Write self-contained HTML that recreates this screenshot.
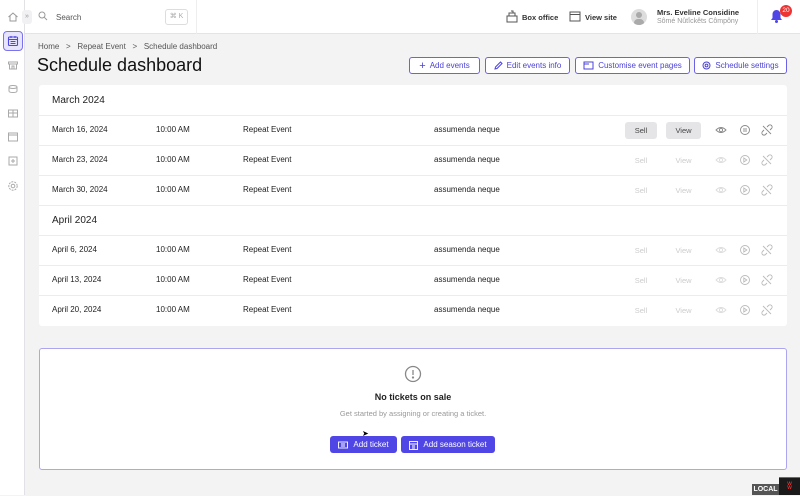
<!DOCTYPE html>
<html><head><meta charset="utf-8"><style>
*{box-sizing:border-box;margin:0;padding:0}
body{width:800px;height:495px;overflow:hidden;background:#f3f3f4;font-family:"Liberation Sans",sans-serif;color:#222;position:relative}
.abs{position:absolute}
.side{left:0;top:0;width:25px;height:495px;background:#fff;border-right:1px solid #e2e2e6}
.top{left:25px;top:0;width:775px;height:34px;background:#fff;border-bottom:1px solid #e4e4e8}
.t9{font-size:8px;color:#333}
.btn{position:absolute;top:57px;height:17px;border:1px solid #6b62e6;border-radius:3px;background:#fff;color:#4b43d6;font-size:8px;display:flex;align-items:center;justify-content:center;gap:4px}
.card{left:39px;top:85px;width:748px;height:241px;background:#fff;border-radius:3px}
.row{position:absolute;left:0;width:748px;height:30px;border-top:1px solid #ececef;font-size:8px;color:#222}
.row span{position:absolute;top:9px}
.hdr{font-size:10px;color:#222}
.sb{position:absolute;top:6px;height:17px;border-radius:3px;font-size:7.5px;display:flex;align-items:center;justify-content:center}
.pb{position:absolute;top:436px;height:17px;background:#4f46e5;color:#fff;border-radius:3px;font-size:8px;display:flex;align-items:center;justify-content:center;gap:5px}
svg{display:block}
</style></head><body>
<div class="abs side"></div>
<div class="abs" style="left:7px;top:11px"><svg width="12" height="12" viewBox="0 0 12 12" fill="none" stroke="#999" stroke-width="1"><path d="M1.5 6 6 2l4.5 4M3 5v5h6V5"/></svg></div>
<div class="abs" style="left:3px;top:31px;width:20px;height:20px;border:1.5px solid #7b73ee;background:#e7e5fd;border-radius:4px"></div>
<div class="abs" style="left:7px;top:35px"><svg width="12" height="12" viewBox="0 0 12 12" fill="none" stroke="#4f46e5" stroke-width="1.1"><rect x="1.5" y="2" width="9" height="8.5" rx="1"/><path d="M1.5 4.5h9M4 1v2M8 1v2M3.5 6.5h5M3.5 8.5h5"/></svg></div>
<div class="abs" style="left:7px;top:59px"><svg width="12" height="12" viewBox="0 0 12 12" fill="none" stroke="#aaa"><path d="M1.5 3h9v2h-9zM2.5 5v5h7V5M5 10V7h2v3"/></svg></div>
<div class="abs" style="left:7px;top:83px"><svg width="12" height="12" viewBox="0 0 12 12" fill="none" stroke="#aaa"><ellipse cx="6" cy="4" rx="4" ry="1.5"/><path d="M2 4v4c0 1 2 1.5 4 1.5S10 9 10 8V4"/></svg></div>
<div class="abs" style="left:7px;top:107px"><svg width="12" height="12" viewBox="0 0 12 12" fill="none" stroke="#aaa"><rect x="1.5" y="3" width="9" height="7"/><path d="M1.5 6h9M6 3v7"/></svg></div>
<div class="abs" style="left:7px;top:131px"><svg width="12" height="12" viewBox="0 0 12 12" fill="none" stroke="#aaa"><rect x="1.5" y="2" width="9" height="8"/><path d="M1.5 4h9"/></svg></div>
<div class="abs" style="left:7px;top:155px"><svg width="12" height="12" viewBox="0 0 12 12" fill="none" stroke="#aaa"><rect x="2" y="2" width="8" height="8"/><path d="M4 6h4M6 4v4"/></svg></div>
<div class="abs" style="left:7px;top:180px"><svg width="12" height="12" viewBox="0 0 12 12" fill="none" stroke="#aaa"><circle cx="6" cy="6" r="1.8"/><circle cx="6" cy="6" r="4.2" stroke-dasharray="2 1"/></svg></div>

<div class="abs top"></div>
<div class="abs" style="left:22px;top:10px;width:10px;height:14px;background:#f1f1f3;border-radius:3px;font-size:7px;color:#999;text-align:center;line-height:14px">»</div>
<div class="abs" style="left:38px;top:11px"><svg width="10" height="10" viewBox="0 0 10 10" fill="none" stroke="#999"><circle cx="4" cy="4" r="3"/><path d="M6.3 6.3 9 9"/></svg></div>
<div class="abs t9" style="left:56px;top:13px;color:#555">Search</div>
<div class="abs" style="left:165px;top:9px;width:23px;height:16px;border:1px solid #ddd;border-radius:3px;font-size:7px;color:#aaa;text-align:center;line-height:14px">⌘ K</div>
<div class="abs" style="left:196px;top:0;width:1px;height:34px;background:#eee"></div>
<div class="abs" style="left:506px;top:10px"><svg width="12" height="13" viewBox="0 0 12 13" fill="none" stroke="#555"><rect x="1" y="6" width="10" height="6"/><rect x="3" y="3" width="6" height="3"/><path d="M5 1h2v2"/></svg></div>
<div class="abs t9" style="left:522px;top:13px;font-weight:bold;color:#333;font-size:7.5px">Box office</div>
<div class="abs" style="left:569px;top:11px"><svg width="12" height="11" viewBox="0 0 12 11" fill="none" stroke="#555"><rect x="1" y="1" width="10" height="9"/><path d="M1 3.5h10"/></svg></div>
<div class="abs t9" style="left:585px;top:13px;font-weight:bold;font-size:7.5px">View site</div>
<div class="abs" style="left:631px;top:9px;width:16px;height:16px;border-radius:50%;background:#ddd;overflow:hidden"><div style="position:absolute;left:5px;top:3px;width:6px;height:6px;border-radius:50%;background:#aaa"></div><div style="position:absolute;left:3px;top:10px;width:10px;height:8px;border-radius:5px;background:#aaa"></div></div>
<div class="abs" style="left:657px;top:8px;font-size:7.5px;font-weight:bold;color:#333">Mrs. Eveline Considine</div>
<div class="abs" style="left:657px;top:18px;font-size:7px;color:#999">Sômé Nûtîckêts Cômpôny</div>
<div class="abs" style="left:757px;top:0;width:1px;height:34px;background:#eee"></div>
<div class="abs" style="left:770px;top:9px"><svg width="13" height="15" viewBox="0 0 13 15"><path d="M6.5 1C4 1 2.5 3 2.5 5.5V9L1 11h11L10.5 9V5.5C10.5 3 9 1 6.5 1z" fill="#4f46e5"/><circle cx="6.5" cy="12.5" r="1.5" fill="#4f46e5"/></svg></div>
<div class="abs" style="left:780px;top:5px;width:12px;height:12px;border-radius:50%;background:#e33;color:#fff;font-size:6.5px;text-align:center;line-height:12px">20</div>

<div class="abs" style="left:38px;top:42px;font-size:8px;color:#555">Home &nbsp;&nbsp;&gt;&nbsp;&nbsp; Repeat Event &nbsp;&nbsp;&gt;&nbsp;&nbsp; Schedule dashboard</div>
<div class="abs" style="left:37px;top:55px;font-size:18px;color:#111">Schedule dashboard</div>

<div class="btn" style="left:409px;width:71px"><span style="font-size:11px">+</span>Add events</div>
<div class="btn" style="left:485px;width:85px"><svg width="9" height="9" viewBox="0 0 9 9" fill="none" stroke="#4b43d6"><path d="M1 8l.5-2L6.5 1 8 2.5 3 7.5z"/></svg>Edit events info</div>
<div class="btn" style="left:575px;width:115px"><svg width="11" height="9" viewBox="0 0 11 9" fill="none" stroke="#4b43d6"><rect x="1" y="1" width="9" height="7"/><path d="M1 3h5"/></svg>Customise event pages</div>
<div class="btn" style="left:694px;width:93px"><svg width="9" height="9" viewBox="0 0 9 9" fill="none" stroke="#4b43d6"><circle cx="4.5" cy="4.5" r="1.4"/><circle cx="4.5" cy="4.5" r="3.5"/></svg>Schedule settings</div>

<div class="abs card">
<div class="abs hdr" style="left:13px;top:10px">March 2024</div>
<div class="row" style="top:30px"><span style="left:13px">March 16, 2024</span><span style="left:117px">10:00 AM</span><span style="left:204px">Repeat Event</span><span style="left:395px">assumenda neque</span>
<div class="sb" style="left:586px;width:32px;background:#e5e5e8;color:#444">Sell</div><div class="sb" style="left:627px;width:35px;background:#e5e5e8;color:#444">View</div></div>
<div class="row" style="top:60px"><span style="left:13px">March 23, 2024</span><span style="left:117px">10:00 AM</span><span style="left:204px">Repeat Event</span><span style="left:395px">assumenda neque</span><div class="sb" style="left:586px;width:32px;color:#ccc">Sell</div><div class="sb" style="left:627px;width:35px;color:#ccc">View</div></div>
<div class="row" style="top:90px"><span style="left:13px">March 30, 2024</span><span style="left:117px">10:00 AM</span><span style="left:204px">Repeat Event</span><span style="left:395px">assumenda neque</span><div class="sb" style="left:586px;width:32px;color:#ccc">Sell</div><div class="sb" style="left:627px;width:35px;color:#ccc">View</div></div>
<div class="row hdr" style="top:120px;font-size:10px"><span style="left:13px;top:9px">April 2024</span></div>
<div class="row" style="top:150px"><span style="left:13px">April 6, 2024</span><span style="left:117px">10:00 AM</span><span style="left:204px">Repeat Event</span><span style="left:395px">assumenda neque</span><div class="sb" style="left:586px;width:32px;color:#ccc">Sell</div><div class="sb" style="left:627px;width:35px;color:#ccc">View</div></div>
<div class="row" style="top:180px"><span style="left:13px">April 13, 2024</span><span style="left:117px">10:00 AM</span><span style="left:204px">Repeat Event</span><span style="left:395px">assumenda neque</span><div class="sb" style="left:586px;width:32px;color:#ccc">Sell</div><div class="sb" style="left:627px;width:35px;color:#ccc">View</div></div>
<div class="row" style="top:210px"><span style="left:13px">April 20, 2024</span><span style="left:117px">10:00 AM</span><span style="left:204px">Repeat Event</span><span style="left:395px">assumenda neque</span><div class="sb" style="left:586px;width:32px;color:#ccc">Sell</div><div class="sb" style="left:627px;width:35px;color:#ccc">View</div></div>
</div>
<svg class="abs" style="left:0;top:0" width="800" height="330">
<defs>
<g id="eye" fill="none" stroke-width="0.9"><path d="M-5 0Q0-5 5 0Q0 5-5 0z"/><circle r="1.6"/></g>
<g id="ply" fill="none" stroke-width="0.9"><circle r="4.5"/><path d="M-1.2-2v4l3-2z"/></g>
<g id="lnk" fill="none" stroke-width="0.9"><path d="M-4-4l8 8M-3 0l-1.5 1.5a1.5 1.5 0 0 0 3 3L0 3M3 0l1.5-1.5a1.5 1.5 0 0 0-3-3L0-3"/></g>
</defs>
<g stroke="#888"><use href="#eye" x="721" y="130"/><g transform="translate(745 130)" fill="none" stroke-width="0.9"><circle r="4.5"/><path d="M-1-2v4M1-2v4"/></g><use href="#lnk" x="767" y="130"/></g>
<g stroke="#bbb">
<use href="#eye" x="721" y="160" stroke="#ddd"/><use href="#ply" x="745" y="160"/><use href="#lnk" x="767" y="160"/>
<use href="#eye" x="721" y="190" stroke="#ddd"/><use href="#ply" x="745" y="190"/><use href="#lnk" x="767" y="190"/>
<use href="#eye" x="721" y="250" stroke="#ddd"/><use href="#ply" x="745" y="250"/><use href="#lnk" x="767" y="250"/>
<use href="#eye" x="721" y="280" stroke="#ddd"/><use href="#ply" x="745" y="280"/><use href="#lnk" x="767" y="280"/>
<use href="#eye" x="721" y="310" stroke="#ddd"/><use href="#ply" x="745" y="310"/><use href="#lnk" x="767" y="310"/>
</g>
</svg>

<div class="abs" style="left:39px;top:348px;width:748px;height:122px;background:#fff;border:1px solid #aca5f0;border-radius:3px"></div>
<div class="abs" style="left:404px;top:365px"><svg width="18" height="18" viewBox="0 0 18 18" fill="none" stroke="#888" stroke-width="1.3"><circle cx="9" cy="9" r="7.5"/><path d="M9 5v5"/><circle cx="9" cy="12.5" r=".5" fill="#888"/></svg></div>
<div class="abs" style="left:300px;top:392px;width:226px;text-align:center;font-size:9px;font-weight:bold;color:#222">No tickets on sale</div>
<div class="abs" style="left:300px;top:409px;width:226px;text-align:center;font-size:7.5px;color:#999">Get started by assigning or creating a ticket.</div>
<div class="pb" style="left:330px;width:67px"><svg width="10" height="8" viewBox="0 0 10 8" fill="none" stroke="#fff" stroke-width=".9"><rect x=".5" y="1" width="9" height="6"/><path d="M3 3h4M3 5h4"/></svg>Add ticket</div>
<div class="pb" style="left:401px;width:94px"><svg width="9" height="10" viewBox="0 0 9 10" fill="none" stroke="#fff" stroke-width=".9"><rect x=".5" y="1.5" width="8" height="8"/><path d="M.5 4h8M3 6h3M3 8h3"/></svg>Add season ticket</div>
<div class="abs" style="left:362px;top:429px;font-size:8px;color:#000">➤</div>

<div class="abs" style="left:752px;top:484px;width:27px;height:11px;background:#555;color:#fff;font-size:7px;font-weight:bold;text-align:center;line-height:11px">LOCAL</div>
<div class="abs" style="left:779px;top:477px;width:21px;height:18px;background:#1a1a1a;border-top:1px solid #e33;color:#e33;font-size:10px;text-align:center;line-height:18px">ʬ</div>
</body></html>
